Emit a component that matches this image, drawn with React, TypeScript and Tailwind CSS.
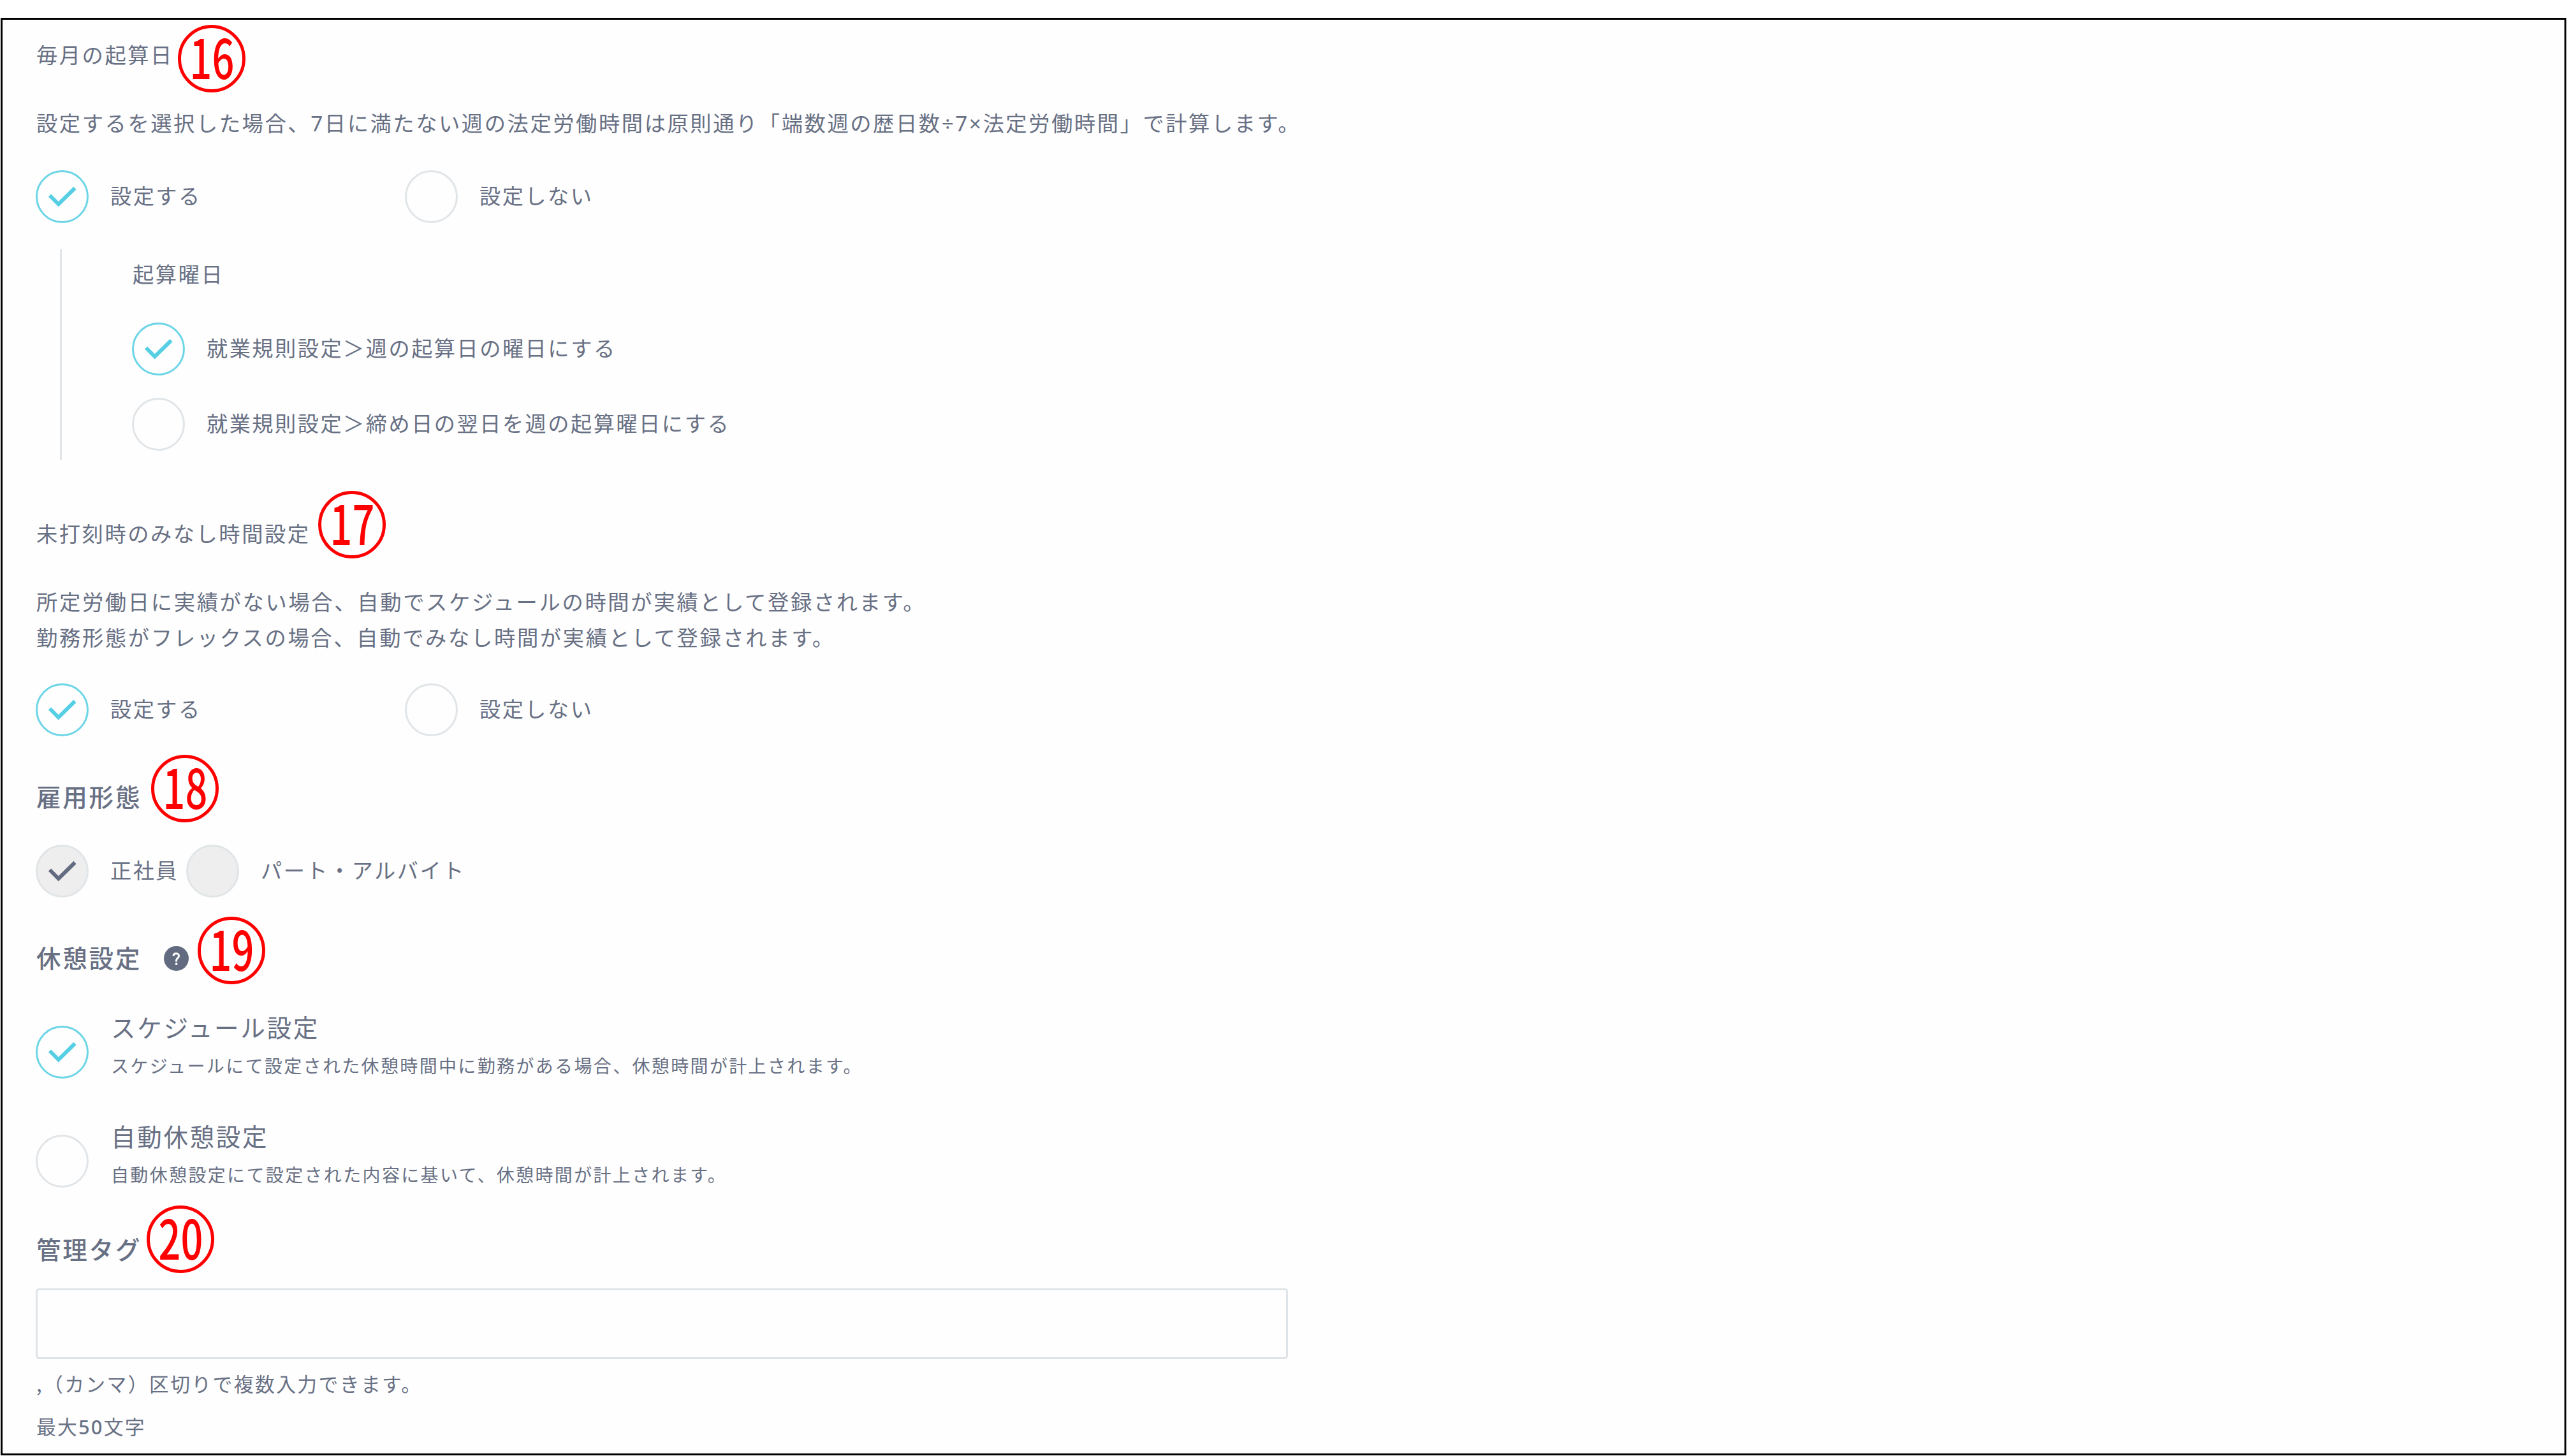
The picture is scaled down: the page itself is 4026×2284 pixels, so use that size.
import { useState } from 'react'

type RadioProps = {
  label?: string
  checked: boolean
  disabled?: boolean
  onSelect?: () => void
}

function RadioMark({ checked, disabled }: { checked: boolean; disabled?: boolean }) {
  const tone = disabled
    ? 'border-[#e1e5e7] bg-[#eeeeee] text-[#626b80]'
    : checked
      ? 'border-[#6cd5e6] text-[#56cfe4]'
      : 'border-[#e1e5e8] text-transparent'

  return (
    <span className={`block size-[83px] shrink-0 rounded-full border-[3px] ${tone}`}>
      {checked && (
        <svg viewBox="0 0 77 77" className="size-full" fill="none" stroke="currentColor" strokeWidth="6">
          <path d="M19 36.5 32.7 50.3 58.5 25" />
        </svg>
      )}
    </span>
  )
}

function Radio({ label, checked, disabled, onSelect }: RadioProps) {
  return (
    <button type="button" onClick={onSelect} disabled={disabled} className="flex h-[83px] items-center gap-[34px] whitespace-nowrap">
      <RadioMark checked={checked} disabled={disabled} />
      <span className="pb-[6px] text-[33.2px] leading-[56px] tracking-[2.5px]">{label}</span>
    </button>
  )
}

function Badge({ children, className }: { children: number; className: string }) {
  return (
    <span className={`absolute flex size-[106px] items-center justify-center rounded-full border-[5px] border-[#ff0000] pb-[12px] text-[85px] leading-none font-medium tracking-normal text-[#ff0000] ${className}`}>
      <span className="block scale-x-[0.72]">{children}</span>
    </span>
  )
}

export default function App() {
  const [startDay, setStartDay] = useState(true)
  const [weekday, setWeekday] = useState('week')
  const [deemed, setDeemed] = useState(true)
  const [breakType, setBreakType] = useState('schedule')
  const [tags, setTags] = useState('')

  const breakOptions = [
    {
      id: 'schedule',
      title: 'スケジュール設定',
      note: 'スケジュールにて設定された休憩時間中に勤務がある場合、休憩時間が計上されます。',
    },
    {
      id: 'auto',
      title: '自動休憩設定',
      note: '自動休憩設定にて設定された内容に基いて、休憩時間が計上されます。',
    },
  ]

  return (
    <div lang="ja" className="h-[2284px] w-[4026px] overflow-hidden bg-white pt-[28px] pl-px font-['Noto_Sans_CJK_JP',sans-serif] text-[#687084]">
      <div className="flex h-[2255px] w-[4024px] flex-col items-start border-[3px] border-black bg-[#fefefe] pl-[52px]">
        {/* 毎月の起算日 */}
        <h3 className="relative mt-[26px] pl-px text-[33.3px] leading-[56px] tracking-[2.5px]">
          毎月の起算日
          <Badge className="-top-[18px] left-[223px]">{16}</Badge>
        </h3>
        <p className="mt-[51px] pl-px text-[33.3px] leading-[56px] tracking-[2.55px] whitespace-nowrap">
          設定するを選択した場合、<span className="font-['Noto_Sans']">7</span>日に満たない週の法定労働時間は原則通り「端数週の歴日数
          <span className="font-['Noto_Sans']">÷7×</span>法定労働時間」で計算します。
        </p>
        <div className="mt-[46px] grid grid-cols-[579px_auto]">
          <Radio label="設定する" checked={startDay} onSelect={() => setStartDay(true)} />
          <Radio label="設定しない" checked={!startDay} onSelect={() => setStartDay(false)} />
        </div>
        <div className="mt-[41px] ml-[38px] flex h-[330px] flex-col items-start border-l-[3px] border-[#e1e5e8] pt-[10px] pl-[110px]">
          <h4 className="pl-px text-[33.3px] leading-[56px] tracking-[2.5px]">起算曜日</h4>
          <div className="mt-[49px] flex flex-col gap-[35px]">
            <Radio label="就業規則設定＞週の起算日の曜日にする" checked={weekday === 'week'} onSelect={() => setWeekday('week')} />
            <Radio label="就業規則設定＞締め日の翌日を週の起算曜日にする" checked={weekday === 'closing'} onSelect={() => setWeekday('closing')} />
          </div>
        </div>

        {/* 未打刻時のみなし時間設定 */}
        <h3 className="relative mt-[87px] pl-px text-[33.3px] leading-[56px] tracking-[2.5px]">
          未打刻時のみなし時間設定
          <Badge className="-top-[38px] left-[443px]">{17}</Badge>
        </h3>
        <p className="mt-[51px] pl-px text-[33.3px] leading-[55.5px] tracking-[2.65px] whitespace-nowrap">
          所定労働日に実績がない場合、自動でスケジュールの時間が実績として登録されます。
          <br />
          勤務形態がフレックスの場合、自動でみなし時間が実績として登録されます。
        </p>
        <div className="mt-[46px] grid grid-cols-[579px_auto]">
          <Radio label="設定する" checked={deemed} onSelect={() => setDeemed(true)} />
          <Radio label="設定しない" checked={!deemed} onSelect={() => setDeemed(false)} />
        </div>

        {/* 雇用形態 */}
        <h2 className="relative mt-[65px] pl-px text-[38.5px] leading-[56px] font-medium tracking-[2.8px]">
          雇用形態
          <Badge className="-top-[36px] left-[181px]">{18}</Badge>
        </h2>
        <div className="mt-[49px] grid grid-cols-[236px_auto]">
          <Radio label="正社員" checked disabled />
          <Radio label="パート・アルバイト" checked={false} disabled />
        </div>

        {/* 休憩設定 */}
        <h2 className="relative mt-[65px] flex items-center pl-px text-[38.5px] leading-[56px] font-medium tracking-[2.8px]">
          休憩設定
          <svg viewBox="0 0 39 39" className="mt-[5px] ml-[35px] size-[39px]" fill="none">
            <circle cx="19.5" cy="19.5" r="19.5" fill="#626b80" />
            <path d="M15 15.8c0-2.5 1.8-4 4.3-4s4.3 1.5 4.3 3.8c0 3.2-4 3.4-4 6.8v2" stroke="#fff" strokeWidth="3" />
            <circle cx="19.6" cy="28" r="1.9" fill="#fff" />
          </svg>
          <Badge className="-top-[35px] left-[254px]">{19}</Badge>
        </h2>
        <div className="mt-[51px] flex flex-col gap-[49px]">
          {breakOptions.map(option => (
            <button key={option.id} type="button" onClick={() => setBreakType(option.id)} className="flex items-center gap-[35px] text-left whitespace-nowrap">
              <span className="pt-[18px]">
                <RadioMark checked={breakType === option.id} />
              </span>
              <span className="flex flex-col">
                <span className="text-[38.5px] leading-[61px] tracking-[2.7px]">{option.title}</span>
                <span className="text-[28px] leading-[61px] tracking-[2.35px]">{option.note}</span>
              </span>
            </button>
          ))}
        </div>

        {/* 管理タグ */}
        <h2 className="relative mt-[57px] pl-px text-[38.5px] leading-[56px] font-medium tracking-[2.8px]">
          管理タグ
          <Badge className="-top-[39px] left-[174px]">{20}</Badge>
        </h2>
        <input
          type="text"
          value={tags}
          onChange={e => setTags(e.target.value)}
          className="mt-[35px] h-[111px] w-[1964px] rounded-[5px] border-[3px] border-[#dfe4e8] px-8 text-[33.3px] outline-none"
        />
        <p className="mt-[10px] pl-px text-[30.8px] leading-[56px] tracking-[2.4px]">,（カンマ）区切りで複数入力できます。</p>
        <p className="mt-[11px] pl-px text-[30.8px] leading-[56px] tracking-[2.2px]">
          最大<span className="font-['Noto_Sans'] font-medium">50</span>文字
        </p>
      </div>
    </div>
  )
}
